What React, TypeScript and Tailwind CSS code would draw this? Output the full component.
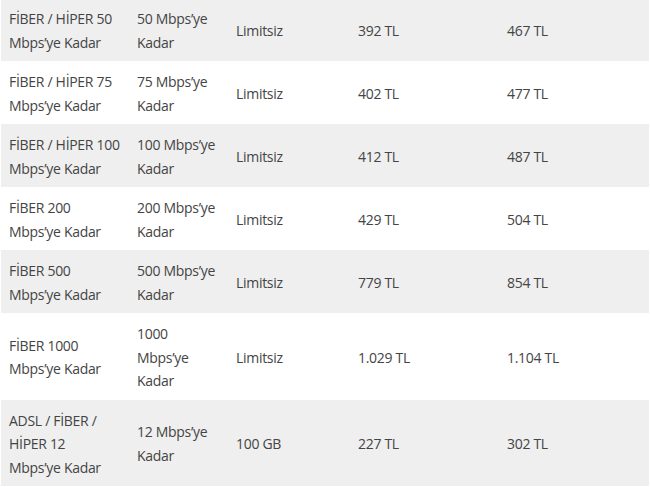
import React from "react";

const rows: { name: React.ReactNode; speed: string; quota: string; price: string; old: string }[] = [
  { name: "FİBER / HİPER 50 Mbps’ye Kadar", speed: "50 Mbps’ye Kadar", quota: "Limitsiz", price: "392 TL", old: "467 TL" },
  { name: "FİBER / HİPER 75 Mbps’ye Kadar", speed: "75 Mbps’ye Kadar", quota: "Limitsiz", price: "402 TL", old: "477 TL" },
  { name: "FİBER / HİPER 100 Mbps’ye Kadar", speed: "100 Mbps’ye Kadar", quota: "Limitsiz", price: "412 TL", old: "487 TL" },
  { name: "FİBER 200 Mbps’ye Kadar", speed: "200 Mbps’ye Kadar", quota: "Limitsiz", price: "429 TL", old: "504 TL" },
  { name: "FİBER 500 Mbps’ye Kadar", speed: "500 Mbps’ye Kadar", quota: "Limitsiz", price: "779 TL", old: "854 TL" },
  { name: "FİBER 1000 Mbps’ye Kadar", speed: "1000 Mbps’ye Kadar", quota: "Limitsiz", price: "1.029 TL", old: "1.104 TL" },
  {
    name: (
      <>
        ADSL / FİBER / HİPER 12
        <br />
        Mbps’ye Kadar
      </>
    ),
    speed: "12 Mbps’ye Kadar",
    quota: "100 GB",
    price: "227 TL",
    old: "302 TL",
  },
];

const App = () => {
  return (
    <div
      className="min-h-[487px] bg-white px-[1px] text-[14px] leading-[23.5px] tracking-[-0.3px] text-[#444]"
      style={{ fontFamily: '"Open Sans", "Noto Sans", sans-serif' }}
    >
      {/* Tarife tablosu */}
      <table className="-mt-[2px] w-[648px] table-fixed border-collapse">
        <colgroup>
          <col className="w-[128px]" />
          <col className="w-[99px]" />
          <col className="w-[122px]" />
          <col className="w-[149px]" />
          <col className="w-[150px]" />
        </colgroup>
        <tbody>
          {rows.map((row, index) => (
            <tr key={index} className={index % 2 === 0 ? "bg-[#efefef]" : "bg-white"}>
              <td className="px-2 pt-[9px] pb-[7px] align-middle">{row.name}</td>
              <td className="px-2 pt-[9px] pb-[7px] align-middle">{row.speed}</td>
              <td className="px-2 pt-[9px] pb-[7px] align-middle">{row.quota}</td>
              <td className="px-2 pt-[9px] pb-[7px] align-middle">{row.price}</td>
              <td className="px-2 pt-[9px] pb-[7px] align-middle">{row.old}</td>
            </tr>
          ))}
        </tbody>
      </table>
    </div>
  );
};

export default App;
